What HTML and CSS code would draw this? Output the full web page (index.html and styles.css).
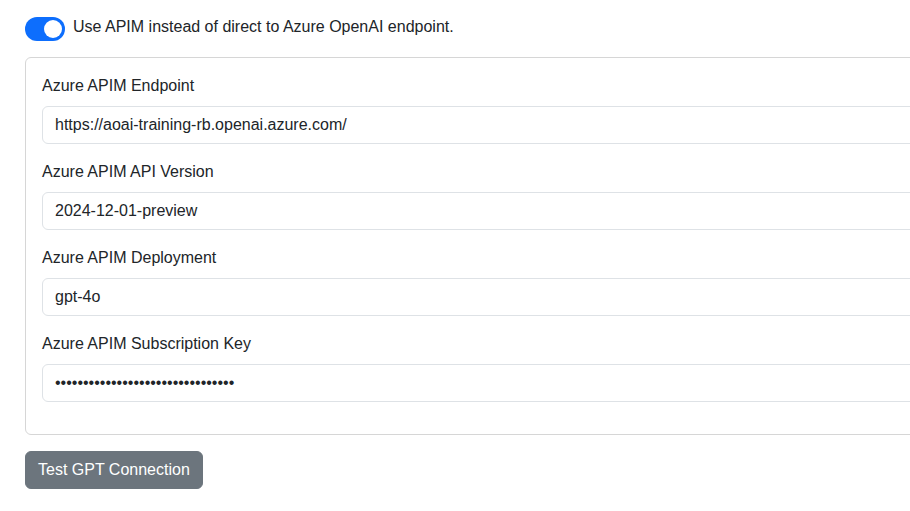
FILE: index.html
```html
<!DOCTYPE html>
<html>
<head>
<meta charset="utf-8">
<link rel="stylesheet" href="styles.css">
</head>
<body>
<div class="page">
  <div class="switch-row">
    <span class="switch" role="switch" aria-checked="true"><span class="knob"></span></span>
    <span class="switch-label">Use APIM instead of direct to Azure OpenAI endpoint.</span>
  </div>
  <div class="card">
    <div class="field">
      <label class="label">Azure APIM Endpoint</label>
      <input class="input" type="text" value="https://aoai-training-rb.openai.azure.com/">
    </div>
    <div class="field">
      <label class="label">Azure APIM API Version</label>
      <input class="input" type="text" value="2024-12-01-preview">
    </div>
    <div class="field">
      <label class="label">Azure APIM Deployment</label>
      <input class="input" type="text" value="gpt-4o">
    </div>
    <div class="field">
      <label class="label">Azure APIM Subscription Key</label>
      <input class="input" type="password" value="abcdefghijklmnopqrstuvwxyz012345">
    </div>
  </div>
  <button class="btn" type="button">Test GPT Connection</button>
</div>
</body>
</html>
```

FILE: styles.css
```css
html, body {
  margin: 0;
  padding: 0;
  background: #fff;
  overflow: hidden;
}
body {
  font-family: "Liberation Sans", Arial, sans-serif;
  font-size: 16px;
  line-height: 24px;
  color: #212529;
}
.page {
  padding: 17px 0 0 25px;
  width: 960px;
}
.switch-row {
  display: flex;
  align-items: flex-start;
  gap: 8px;
  height: 24px;
  margin-bottom: 16px;
}
.switch {
  width: 40px;
  height: 24px;
  border-radius: 12px;
  background: #0d6efd;
  display: flex;
  align-items: center;
  justify-content: flex-end;
  padding: 0 3px;
  box-sizing: border-box;
  flex: none;
}
.knob {
  width: 18px;
  height: 18px;
  border-radius: 50%;
  background: #fff;
}
.switch-label {
  color: #212529;
  line-height: 19px;
}
.card {
  border: 1px solid #d6d6d6;
  border-radius: 6px;
  padding: 16px;
  width: 920px;
}
.field {
  display: flex;
  flex-direction: column;
  margin-bottom: 16px;
}
.label {
  margin-bottom: 8px;
  line-height: 24px;
}
.input {
  height: 38px;
  box-sizing: border-box;
  border: 1px solid #dee2e6;
  border-radius: 6px;
  padding: 6px 12px;
  font-family: "Liberation Sans", Arial, sans-serif;
  font-size: 16px;
  line-height: 24px;
  color: #212529;
  background: #fff;
  outline: none;
  width: 100%;
}
.btn {
  margin-top: 16px;
  height: 38px;
  padding: 6px 12px;
  border: 1px solid #6c757d;
  border-radius: 6px;
  background: #6c757d;
  color: #fff;
  font-family: "Liberation Sans", Arial, sans-serif;
  font-size: 16px;
  line-height: 24px;
  cursor: pointer;
}
```
